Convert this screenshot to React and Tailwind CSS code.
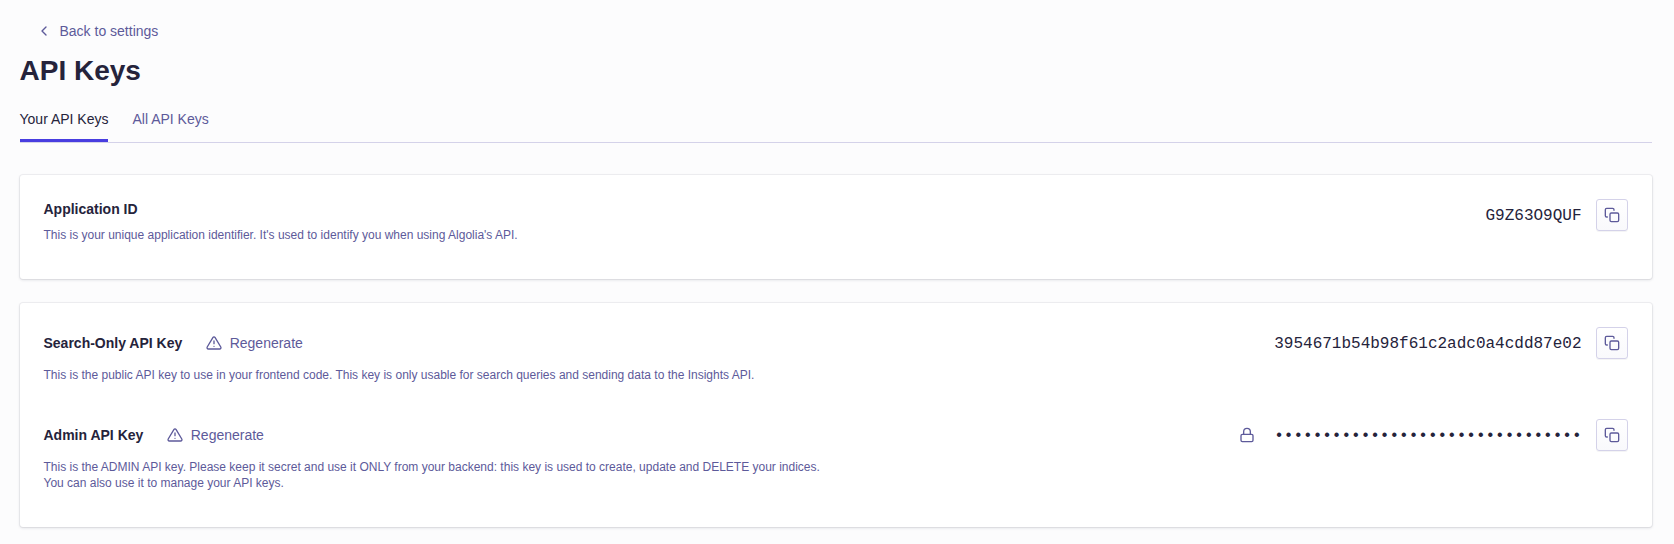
import React from 'react';

const iconProps = {
  viewBox: '0 0 24 24',
  fill: 'none',
  stroke: 'currentColor',
  strokeWidth: 2,
  strokeLinecap: 'round',
  strokeLinejoin: 'round',
};

function ChevronLeft() {
  return (
    <svg {...iconProps} className="size-4">
      <path d="M15 18l-6-6 6-6" />
    </svg>
  );
}

function Warning() {
  return (
    <svg {...iconProps} className="size-4">
      <path d="M10.29 3.86 1.82 18a2 2 0 0 0 1.71 3h16.94a2 2 0 0 0 1.71-3L13.71 3.86a2 2 0 0 0-3.42 0z" />
      <path d="M12 9v4M12 17h.01" />
    </svg>
  );
}

function Lock() {
  return (
    <svg {...iconProps} className="size-4 text-[#5d5a9a]">
      <rect x="3" y="11" width="18" height="11" rx="2" />
      <path d="M7 11V7a5 5 0 0 1 10 0v4" />
    </svg>
  );
}

function CopyButton() {
  return (
    <button
      aria-label="Copy"
      className="flex size-8 items-center justify-center rounded-[3px] border border-[#d4d2e9] bg-linear-to-b from-white to-[#f9f9fc] text-[#5d5a9a] shadow-[0_1px_0_rgba(35,38,59,0.05)]"
    >
      <svg {...iconProps} className="size-4">
        <rect x="9" y="9" width="13" height="13" rx="2" />
        <path d="M5 15H4a2 2 0 0 1-2-2V4a2 2 0 0 1 2-2h9a2 2 0 0 1 2 2v1" />
      </svg>
    </button>
  );
}

function KeyValue({ value, locked }) {
  return (
    <div className="flex h-8 items-center">
      {locked && <Lock />}
      <span className="mr-[14.5px] ml-[19.5px] pt-0.5 font-['Liberation_Mono',monospace] text-base leading-6 text-[#25233b]">
        {value}
      </span>
      <CopyButton />
    </div>
  );
}

function KeyRow({ title, value, locked, children }) {
  return (
    <div className="flex justify-between">
      <div>
        <div className="flex h-8 items-center">
          <h2 className="text-sm font-bold">{title}</h2>
          <button className="ml-[23.4px] flex items-center gap-2 text-sm text-[#5d5a9a]">
            <Warning />
            Regenerate
          </button>
        </div>
        <p className="mt-2 text-xs text-[#5d5a9a]">{children}</p>
      </div>
      <KeyValue value={value} locked={locked} />
    </div>
  );
}

function Card({ className, children }) {
  return (
    <section
      className={`rounded-[3px] bg-white p-6 shadow-[0_0_0_1px_rgba(35,38,59,0.05),0_1px_3px_0_rgba(35,38,59,0.15)] ${className}`}
    >
      {children}
    </section>
  );
}

export default function App() {
  return (
    <main className="h-[544px] bg-[#fcfcfd] pr-[22px] pl-[19.5px] font-['Liberation_Sans',Arial,sans-serif] text-[#25233b]">
      <a className="flex h-[62px] w-fit items-center gap-[7.5px] pl-[16.5px] text-sm text-[#5d5a9a]">
        <ChevronLeft />
        Back to settings
      </a>
      <h1 className="-mt-[7px] text-[28px] leading-8 font-bold">API Keys</h1>
      <nav className="mt-2 flex h-12 gap-6 border-b border-[#d4d2e9] text-sm">
        <a className="h-[47px] border-b-[3px] border-[#483de0] pt-3.5">Your API Keys</a>
        <a className="pt-3.5 text-[#5d5a9a]">All API Keys</a>
      </nav>

      <Card className="mt-8 flex h-[104px] justify-between">
        <div>
          <h2 className="text-sm font-bold">Application ID</h2>
          <p className="mt-2 text-xs text-[#5d5a9a]">
            This is your unique application identifier. It's used to identify you when using Algolia's API.
          </p>
        </div>
        <KeyValue value="G9Z63O9QUF" />
      </Card>

      <Card className="mt-6 flex h-[224px] flex-col gap-9">
        <KeyRow title="Search-Only API Key" value="3954671b54b98f61c2adc0a4cdd87e02">
          This is the public API key to use in your frontend code. This key is only usable for search queries and sending
          data to the Insights API.
        </KeyRow>
        <KeyRow title="Admin API Key" value={'•'.repeat(32)} locked>
          This is the ADMIN API key. Please keep it secret and use it ONLY from your backend: this key is used to create,
          update and DELETE your indices.
          <br />
          You can also use it to manage your API keys.
        </KeyRow>
      </Card>
    </main>
  );
}
